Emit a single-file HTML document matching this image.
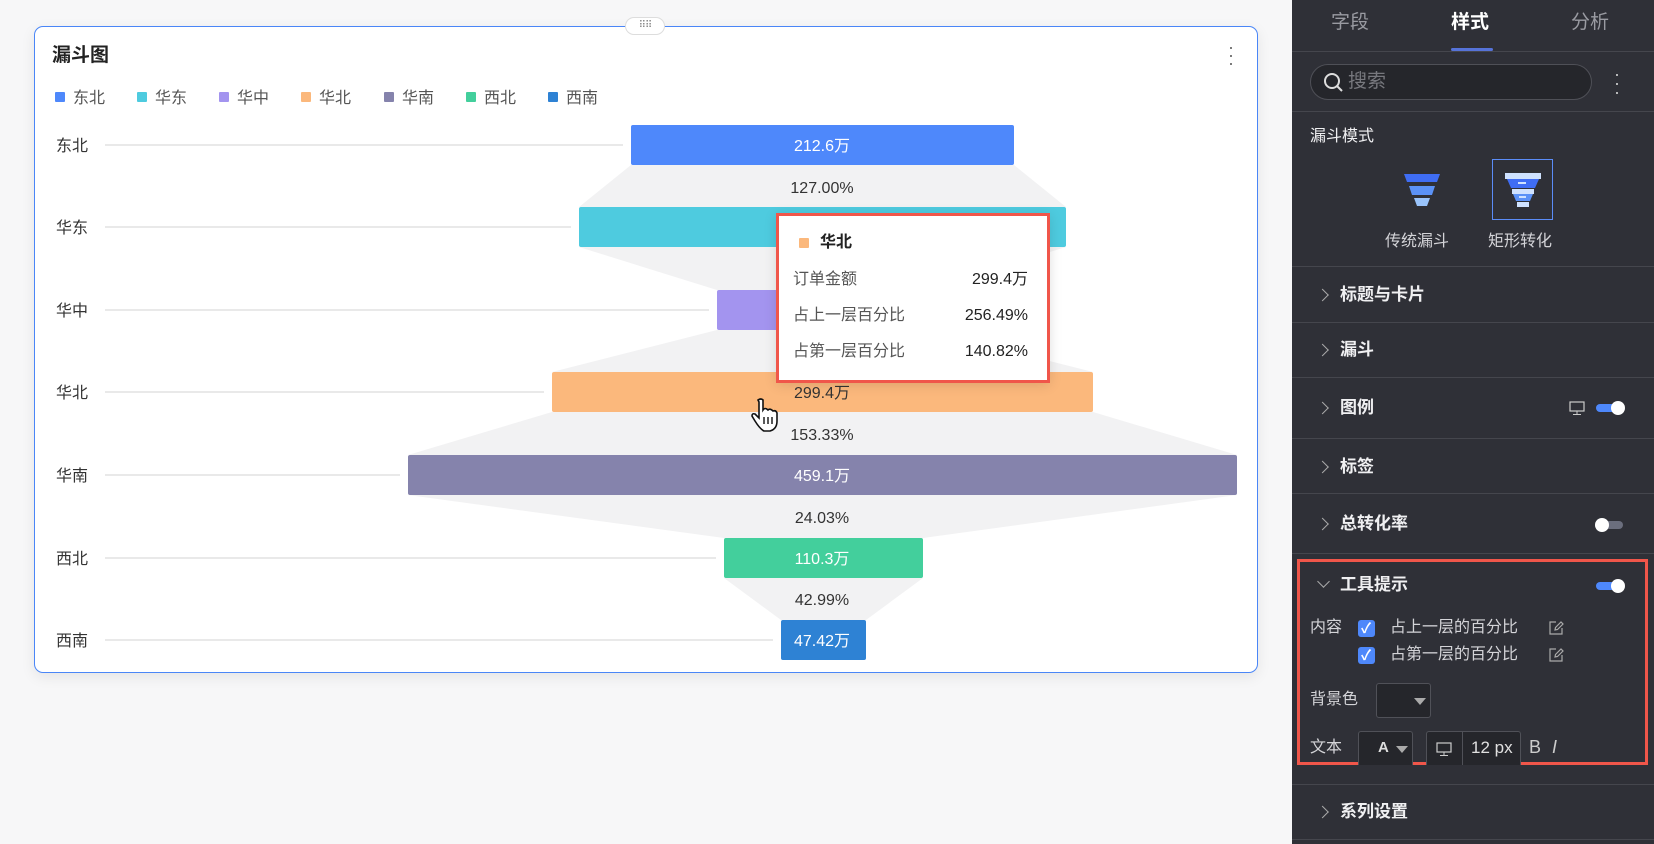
<!DOCTYPE html>
<html><head><meta charset="utf-8"><style>
*{margin:0;padding:0;box-sizing:border-box}
body{width:1654px;height:844px;overflow:hidden;background:#f7f7f8;font-family:"Liberation Sans","Noto Sans CJK SC",sans-serif;position:relative}
.a{position:absolute;white-space:nowrap;line-height:22px}
.card{position:absolute;left:34px;top:26px;width:1224px;height:647px;background:#fff;border:1.5px solid #4a86f7;border-radius:9px;box-shadow:0 4px 14px rgba(0,0,0,.08)}
.panel{position:absolute;left:1292px;top:0;width:362px;height:844px;background:#2f3037;color:#e6e6e8}
.div{position:absolute;left:0;width:362px;height:1px;background:#45464d}
.sec{position:absolute;left:48px;font-size:17px;font-weight:bold;color:#f0f0f2;transform:translateY(-50%);line-height:22px}
.chev{position:absolute;left:26px;width:9px;height:9px;border-right:1.5px solid #aaa;border-bottom:1.5px solid #aaa;transform:translateY(-50%) rotate(-45deg)}
.tog{position:absolute;width:27px;height:8px;border-radius:4px}
.tog i{position:absolute;top:-3px;width:14px;height:14px;border-radius:50%;background:#fff}
.cb{position:absolute;width:17px;height:17px;border-radius:3px;background:#4e88fb}
.lbl{color:#d4d4d8;font-size:16px}
</style></head><body>
<div class="card"></div>
<div class="a" style="left:625px;top:17px;width:40px;height:18px;background:#fff;border:1px solid #ddd;border-radius:9px;text-align:center;font-size:10px;color:#888;line-height:15px;letter-spacing:-1px">⠿⠿</div>
<div class="a" style="left:52px;top:45px;font-size:19px;font-weight:bold;color:#222">漏斗图</div>
<div class="a" style="left:1228px;top:43px;font-size:18px;color:#666;line-height:8px;width:6px;text-align:center">·<br>·<br>·</div>
<svg class="a" style="left:0;top:0" width="1280" height="700">
<g font-family="Liberation Sans,Noto Sans CJK SC,sans-serif" font-size="16" fill="#555">
<rect x="55" y="92" width="10" height="10" rx="1" fill="#4e88fb"/><text x="73" y="103">东北</text>
<rect x="137" y="92" width="10" height="10" rx="1" fill="#4ecbdf"/><text x="155" y="103">华东</text>
<rect x="219" y="92" width="10" height="10" rx="1" fill="#a394ef"/><text x="237" y="103">华中</text>
<rect x="301" y="92" width="10" height="10" rx="1" fill="#fbb87c"/><text x="319" y="103">华北</text>
<rect x="384" y="92" width="10" height="10" rx="1" fill="#8583ac"/><text x="402" y="103">华南</text>
<rect x="466" y="92" width="10" height="10" rx="1" fill="#43cf9c"/><text x="484" y="103">西北</text>
<rect x="548" y="92" width="10" height="10" rx="1" fill="#2e82d4"/><text x="566" y="103">西南</text>
</g>
<g fill="#f2f2f3">
<polygon points="631,165 1014,165 1066,207 579,207"/>
<polygon points="579,247 1066,247 927,290 717,290"/>
<polygon points="717,330 927,330 1093,372 552,372"/>
<polygon points="552,412 1093,412 1237,455 408,455"/>
<polygon points="408,495 1237,495 923,538 724,538"/>
<polygon points="724,578 923,578 866,620 781,620"/>
</g>
<g stroke="#dcdcdc" stroke-width="1.2">
<line x1="105" y1="145" x2="623" y2="145"/><line x1="105" y1="227" x2="571" y2="227"/>
<line x1="105" y1="310" x2="709" y2="310"/><line x1="105" y1="392" x2="544" y2="392"/>
<line x1="105" y1="475" x2="400" y2="475"/><line x1="105" y1="558" x2="716" y2="558"/>
<line x1="105" y1="640" x2="773" y2="640"/>
</g>
<g font-family="Liberation Sans,Noto Sans CJK SC,sans-serif" font-size="16" fill="#333">
<text x="56" y="151">东北</text><text x="56" y="233">华东</text><text x="56" y="316">华中</text><text x="56" y="398">华北</text><text x="56" y="481">华南</text><text x="56" y="564">西北</text><text x="56" y="646">西南</text>
</g>
<rect x="631" y="125" width="383" height="40" rx="2" fill="#4e88fb"/>
<rect x="579" y="207" width="487" height="40" rx="2" fill="#4ecbdf"/>
<rect x="717" y="290" width="210" height="40" rx="2" fill="#a394ef"/>
<rect x="552" y="372" width="541" height="40" rx="2" fill="#fbb87c"/>
<rect x="408" y="455" width="829" height="40" rx="2" fill="#8583ac"/>
<rect x="724" y="538" width="199" height="40" rx="2" fill="#43cf9c"/>
<rect x="781" y="620" width="85" height="40" rx="2" fill="#2e82d4"/>
<g font-family="Liberation Sans,Noto Sans CJK SC,sans-serif" font-size="16" text-anchor="middle">
<text x="822" y="151" fill="#fff">212.6万</text>
<text x="822" y="233" fill="#fff">270.0万</text>
<text x="822" y="398" fill="#333">299.4万</text>
<text x="822" y="481" fill="#fff">459.1万</text>
<text x="822" y="564" fill="#fff">110.3万</text>
<text x="822" y="646" fill="#fff">47.42万</text>
<g fill="#333"><text x="822" y="193">127.00%</text><text x="822" y="440">153.33%</text><text x="822" y="523">24.03%</text><text x="822" y="605">42.99%</text></g>
</g>
<g transform="translate(752,398)">
<path d="M6 2 q3-2 5 0 v10 q2-3 5 0 q2-2 5 1 q3-1 4 2 v8 q0 8-7 10 h-6 q-4-2-9-10 l-3-5 q0-3 3-2 l4 4 v-16 z" fill="#fff" stroke="#111" stroke-width="1.6"/>
<path d="M12 19 v7 M16 19 v7 M20 19 v7" stroke="#111" stroke-width="1.4"/>
</g>
</svg>
<!-- tooltip -->
<div class="a" style="left:776px;top:213px;width:274px;height:170px;border:3px solid #f0564a;background:#fff;box-shadow:0 2px 12px rgba(0,0,0,.12)"></div>
<div class="a" style="left:799px;top:238px;width:10px;height:10px;background:#fbb87c;border-radius:1px"></div>
<div class="a" style="left:820px;top:232px;font-size:16px;font-weight:bold;color:#222">华北</div>
<div class="a" style="left:793px;top:269px;font-size:16px;color:#555">订单金额</div>
<div class="a" style="left:793px;top:305px;font-size:16px;color:#555">占上一层百分比</div>
<div class="a" style="left:793px;top:341px;font-size:16px;color:#555">占第一层百分比</div>
<div class="a" style="right:626px;top:269px;font-size:16px;color:#222">299.4万</div>
<div class="a" style="right:626px;top:305px;font-size:16px;color:#222">256.49%</div>
<div class="a" style="right:626px;top:341px;font-size:16px;color:#222">140.82%</div>

<div class="panel">
<div class="a" style="left:39px;top:12px;font-size:19px;color:#9a9ba2">字段</div>
<div class="a" style="left:159px;top:12px;font-size:19px;color:#fff;font-weight:bold">样式</div>
<div class="a" style="left:279px;top:12px;font-size:19px;color:#9a9ba2">分析</div>
<div class="a" style="left:159px;top:48px;width:42px;height:3px;background:#5673d9;border-radius:2px"></div>
<div class="div" style="top:51px"></div>
<div class="a" style="left:18px;top:64px;width:282px;height:36px;border:1px solid #4f5057;border-radius:18px;background:#25262b"></div>
<svg class="a" style="left:31px;top:72px" width="22" height="22"><circle cx="9" cy="9" r="7" fill="none" stroke="#ddd" stroke-width="2"/><line x1="14" y1="14" x2="19" y2="19" stroke="#ddd" stroke-width="2"/></svg>
<div class="a" style="left:56px;top:71px;font-size:19px;color:#77787e">搜索</div>
<div class="a" style="left:322px;top:70px;font-size:18px;color:#ccc;line-height:9px">·<br>·<br>·</div>
<div class="div" style="top:111px"></div>
<div class="a" style="left:18px;top:126px;font-size:16px;color:#f0f0f2">漏斗模式</div>
<svg class="a" style="left:111px;top:173px" width="40" height="34"><polygon points="1,1 37,1 34,9 4,9" fill="#3f6df4"/><polygon points="6,13 32,13 29,22 9,22" fill="#5b92f7"/><polygon points="11,25 27,25 24,33 14,33" fill="#9ac4fb"/></svg>
<div class="a" style="left:200px;top:159px;width:61px;height:61px;border:1.5px solid #5b8cf7"></div>
<svg class="a" style="left:212px;top:172px" width="38" height="36"><rect x="1" y="1" width="36" height="6" fill="#cfe2ff"/><polygon points="3,7 35,7 31,16 7,16" fill="#3f6df4"/><rect x="14" y="10" width="8" height="2" fill="#cfe2ff"/><rect x="8" y="17" width="22" height="5" fill="#cfe2ff"/><polygon points="9,22 29,22 26,29 12,29" fill="#5b92f7"/><rect x="15" y="24" width="7" height="2" fill="#cfe2ff"/><rect x="13" y="30" width="12" height="5" fill="#cfe2ff"/></svg>
<div class="a" style="left:93px;top:231px;font-size:16px;color:#d4d4d8">传统漏斗</div>
<div class="a" style="left:196px;top:231px;font-size:16px;color:#d4d4d8">矩形转化</div>
<div class="div" style="top:266px"></div>
<div class="chev" style="top:295px"></div><div class="sec" style="top:295px">标题与卡片</div>
<div class="div" style="top:322px"></div>
<div class="chev" style="top:350px"></div><div class="sec" style="top:350px">漏斗</div>
<div class="div" style="top:377px"></div>
<div class="chev" style="top:408px"></div><div class="sec" style="top:408px">图例</div>
<svg class="a" style="left:277px;top:401px" width="17" height="15"><rect x="1" y="1" width="14" height="9" fill="none" stroke="#ccc" stroke-width="1.2"/><line x1="8" y1="10" x2="8" y2="13" stroke="#ccc"/><line x1="4" y1="13.5" x2="12" y2="13.5" stroke="#ccc"/></svg>
<div class="tog" style="left:304px;top:404px;background:#4e88fb"><i style="left:15px"></i></div>
<div class="div" style="top:438px"></div>
<div class="chev" style="top:467px"></div><div class="sec" style="top:467px">标签</div>
<div class="div" style="top:493px"></div>
<div class="chev" style="top:524px"></div><div class="sec" style="top:524px">总转化率</div>
<div class="tog" style="left:304px;top:521px;background:#6b6e7d"><i style="left:-1px"></i></div>
<div class="div" style="top:553px"></div>
<div class="a" style="left:5px;top:559px;width:351px;height:206px;border:3px solid #f0564a"></div>
<div class="a" style="left:27px;top:577px;width:9px;height:9px;border-right:1.5px solid #aaa;border-bottom:1.5px solid #aaa;transform:rotate(45deg)"></div>
<div class="sec" style="top:585px">工具提示</div>
<div class="tog" style="left:304px;top:582px;background:#4e88fb"><i style="left:15px"></i></div>
<div class="a lbl" style="left:18px;top:617px">内容</div>
<div class="cb" style="left:66px;top:620px"></div><div class="a" style="left:69px;top:617px;color:#fff;font-size:14px;font-weight:bold">✓</div>
<div class="a lbl" style="left:98px;top:617px">占上一层的百分比</div>
<div class="cb" style="left:66px;top:647px"></div><div class="a" style="left:69px;top:644px;color:#fff;font-size:14px;font-weight:bold">✓</div>
<div class="a lbl" style="left:98px;top:644px">占第一层的百分比</div>
<svg class="a" style="left:256px;top:620px" width="16" height="16"><path d="M8 2 H2 V14 H14 V8" fill="none" stroke="#aaa" stroke-width="1.2"/><path d="M7 10 L7.5 7.5 L13 2 L15 4 L9.5 9.5 Z" fill="none" stroke="#aaa" stroke-width="1.2"/></svg>
<svg class="a" style="left:256px;top:647px" width="16" height="16"><path d="M8 2 H2 V14 H14 V8" fill="none" stroke="#aaa" stroke-width="1.2"/><path d="M7 10 L7.5 7.5 L13 2 L15 4 L9.5 9.5 Z" fill="none" stroke="#aaa" stroke-width="1.2"/></svg>
<div class="a lbl" style="left:18px;top:689px">背景色</div>
<div class="a" style="left:84px;top:683px;width:55px;height:35px;border:1px solid #505158;border-radius:3px;background:#25262b"></div>
<div class="a" style="left:122px;top:698px;border-left:6px solid transparent;border-right:6px solid transparent;border-top:7px solid #aaa"></div>
<div class="a lbl" style="left:18px;top:737px">文本</div>
<div class="a" style="left:66px;top:731px;width:55px;height:34px;border:1px solid #505158;border-radius:3px 3px 0 0;border-bottom:none;background:#25262b"></div>
<div class="a" style="left:86px;top:737px;font-size:15px;font-weight:bold;color:#ddd">A</div>
<div class="a" style="left:104px;top:746px;border-left:6px solid transparent;border-right:6px solid transparent;border-top:7px solid #aaa"></div>
<div class="a" style="left:134px;top:731px;width:95px;height:34px;border:1px solid #505158;border-radius:3px 3px 0 0;border-bottom:none;background:#25262b"></div>
<div class="a" style="left:170px;top:731px;width:1px;height:34px;background:#505158"></div>
<svg class="a" style="left:144px;top:742px" width="17" height="15"><rect x="1" y="1" width="14" height="9" fill="none" stroke="#ccc" stroke-width="1.2"/><line x1="8" y1="10" x2="8" y2="13" stroke="#ccc"/><line x1="4" y1="13.5" x2="12" y2="13.5" stroke="#ccc"/></svg>
<div class="a" style="left:179px;top:737px;font-size:17px;color:#e0e0e0">12 px</div>
<div class="a" style="left:237px;top:736px;font-size:18px;color:#ccc">B</div>
<div class="a" style="left:260px;top:736px;font-size:18px;color:#ccc;font-style:italic">I</div>
<div class="div" style="top:784px"></div>
<div class="chev" style="top:812px"></div><div class="sec" style="top:812px">系列设置</div>
<div class="div" style="top:839px"></div>
</div>
</body></html>
